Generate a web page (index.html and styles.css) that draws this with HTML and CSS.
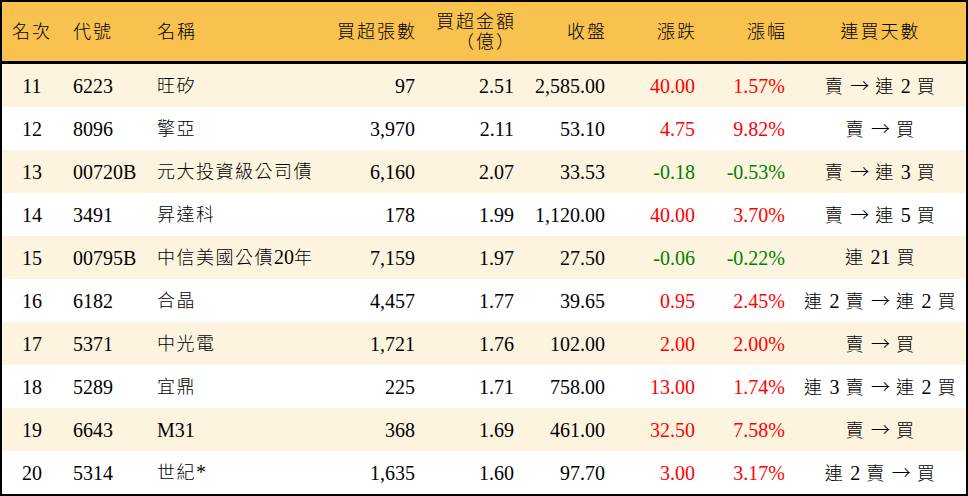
FILE: index.html
```html
<!DOCTYPE html>
<html lang="zh-Hant">
<head>
<meta charset="utf-8">
<link rel="stylesheet" href="styles.css">
</head>
<body>
<div class="board">
<table class="rank">
<colgroup>
<col class="c1"><col class="c2"><col class="c3"><col class="c4"><col class="c5"><col class="c6"><col class="c7"><col class="c8"><col class="c9">
</colgroup>
<thead>
<tr>
<th class="ctr">名次</th>
<th class="lft">代號</th>
<th class="lft">名稱</th>
<th class="rgt">買超張數</th>
<th class="rgt">買超金額<br>（億）</th>
<th class="rgt">收盤</th>
<th class="rgt">漲跌</th>
<th class="rgt">漲幅</th>
<th class="ctr">連買天數</th>
</tr>
</thead>
<tbody>
<tr class="odd"><td class="ctr">11</td><td class="lft">6223</td><td class="lft cj">旺矽</td><td class="rgt">97</td><td class="rgt">2.51</td><td class="rgt">2,585.00</td><td class="rgt up">40.00</td><td class="rgt up">1.57%</td><td class="ctr cj">賣 <span class="ar">→</span> 連 <span class="n">2</span> 買</td></tr>
<tr><td class="ctr">12</td><td class="lft">8096</td><td class="lft cj">擎亞</td><td class="rgt">3,970</td><td class="rgt">2.11</td><td class="rgt">53.10</td><td class="rgt up">4.75</td><td class="rgt up">9.82%</td><td class="ctr cj">賣 <span class="ar">→</span> 買</td></tr>
<tr class="odd"><td class="ctr">13</td><td class="lft">00720B</td><td class="lft cj">元大投資級公司債</td><td class="rgt">6,160</td><td class="rgt">2.07</td><td class="rgt">33.53</td><td class="rgt down">-0.18</td><td class="rgt down">-0.53%</td><td class="ctr cj">賣 <span class="ar">→</span> 連 <span class="n">3</span> 買</td></tr>
<tr><td class="ctr">14</td><td class="lft">3491</td><td class="lft cj">昇達科</td><td class="rgt">178</td><td class="rgt">1.99</td><td class="rgt">1,120.00</td><td class="rgt up">40.00</td><td class="rgt up">3.70%</td><td class="ctr cj">賣 <span class="ar">→</span> 連 <span class="n">5</span> 買</td></tr>
<tr class="odd"><td class="ctr">15</td><td class="lft">00795B</td><td class="lft cj">中信美國公債<span class="n">20</span>年</td><td class="rgt">7,159</td><td class="rgt">1.97</td><td class="rgt">27.50</td><td class="rgt down">-0.06</td><td class="rgt down">-0.22%</td><td class="ctr cj">連 <span class="n">21</span> 買</td></tr>
<tr><td class="ctr">16</td><td class="lft">6182</td><td class="lft cj">合晶</td><td class="rgt">4,457</td><td class="rgt">1.77</td><td class="rgt">39.65</td><td class="rgt up">0.95</td><td class="rgt up">2.45%</td><td class="ctr cj">連 <span class="n">2</span> 賣 <span class="ar">→</span> 連 <span class="n">2</span> 買</td></tr>
<tr class="odd"><td class="ctr">17</td><td class="lft">5371</td><td class="lft cj">中光電</td><td class="rgt">1,721</td><td class="rgt">1.76</td><td class="rgt">102.00</td><td class="rgt up">2.00</td><td class="rgt up">2.00%</td><td class="ctr cj">賣 <span class="ar">→</span> 買</td></tr>
<tr><td class="ctr">18</td><td class="lft">5289</td><td class="lft cj">宜鼎</td><td class="rgt">225</td><td class="rgt">1.71</td><td class="rgt">758.00</td><td class="rgt up">13.00</td><td class="rgt up">1.74%</td><td class="ctr cj">連 <span class="n">3</span> 賣 <span class="ar">→</span> 連 <span class="n">2</span> 買</td></tr>
<tr class="odd"><td class="ctr">19</td><td class="lft">6643</td><td class="lft">M31</td><td class="rgt">368</td><td class="rgt">1.69</td><td class="rgt">461.00</td><td class="rgt up">32.50</td><td class="rgt up">7.58%</td><td class="ctr cj">賣 <span class="ar">→</span> 買</td></tr>
<tr><td class="ctr">20</td><td class="lft">5314</td><td class="lft cj">世紀<span class="n">*</span></td><td class="rgt">1,635</td><td class="rgt">1.60</td><td class="rgt">97.70</td><td class="rgt up">3.00</td><td class="rgt up">3.17%</td><td class="ctr cj">連 <span class="n">2</span> 賣 <span class="ar">→</span> 買</td></tr>
</tbody>
</table>
</div>
</body>
</html>
```
FILE: styles.css
```css
html, body {
  margin: 0;
  padding: 0;
  background: #ffffff;
}
.board {
  width: 968px;
  height: 496px;
  box-sizing: border-box;
  border: 2px solid #000;
  background: #ffffff;
  overflow: hidden;
}
.rank {
  width: 964px;
  border-collapse: collapse;
  table-layout: fixed;
  font-family: "Liberation Serif", "Noto Sans CJK TC", serif;
  font-size: 20px;
  color: #000;
}
.c1 { width: 60px; }
.c2 { width: 84px; }
.c3 { width: 184px; }
.c4 { width: 95px; }
.c5 { width: 99px; }
.c6 { width: 91px; }
.c7 { width: 90px; }
.c8 { width: 90px; }
.c9 { width: 171px; }
.rank th {
  height: 59px;
  padding: 0;
  background: #f9c24f;
  border-bottom: 3px solid #000;
  font-weight: 300;
  font-size: 18px;
  letter-spacing: 2px;
  line-height: 20px;
  vertical-align: middle;
  white-space: nowrap;
}
.rank th.rgt {
  padding-right: 8px !important;
}
.rank td {
  height: 43px;
  padding: 0;
  line-height: 20px;
  vertical-align: middle;
  white-space: nowrap;
}
.rank td.cj {
  font-size: 18px;
  font-weight: 300;
  letter-spacing: 1.5px;
}
.rank tr.odd td {
  background: #fdf4df;
}
.n {
  font-size: 20px;
  font-weight: normal;
  letter-spacing: 0;
}
.ar {
  font-family: "Noto Sans CJK TC", sans-serif;
  font-size: 19px;
  font-weight: 300;
  letter-spacing: 0;
}
.ctr { text-align: center; }
.lft { text-align: left; padding-left: 11px !important; }
.rgt { text-align: right; padding-right: 10px !important; }
.up { color: #ff0000; }
.down { color: #008000; }
```
